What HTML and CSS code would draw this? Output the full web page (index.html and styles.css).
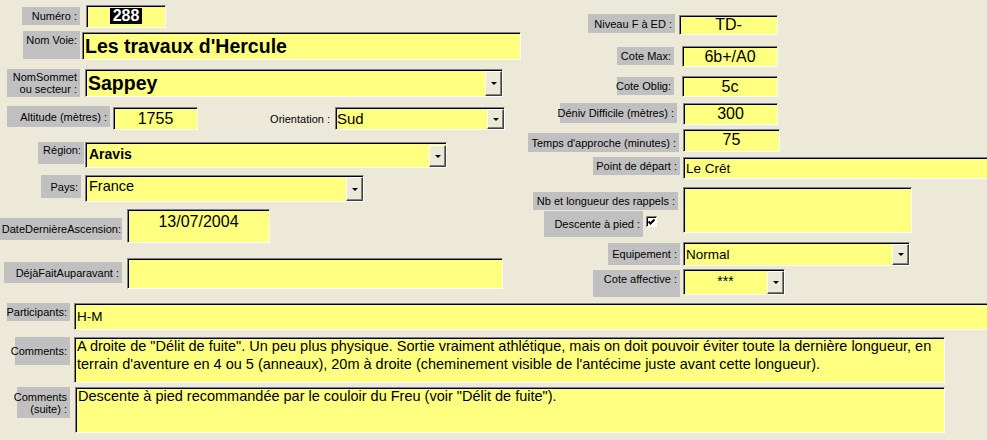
FILE: index.html
```html
<!DOCTYPE html>
<html lang="fr">
<head>
<meta charset="utf-8">
<title>Fiche voie</title>
<link rel="stylesheet" href="styles.css">
</head>
<body>
<div class="form">
  <div class="top">
    <div class="col-left">
      <div class="row r-num">
        <div class="lbl">Numéro :</div>
        <div class="fld c"><span class="sel">288</span></div>
      </div>
      <div class="row r-voie">
        <div class="lbl up">Nom Voie:</div>
        <div class="fld big"><span class="txt">Les travaux d'Hercule</span></div>
      </div>
      <div class="row r-sommet">
        <div class="lbl">NomSommet<br>ou secteur :</div>
        <div class="fld big"><span class="txt">Sappey</span><span class="dd"></span></div>
      </div>
      <div class="row r-alt">
        <div class="lbl">Altitude (mètres) :</div>
        <div class="fld c num">1755</div>
        <div class="lbl plain orient">Orientation :</div>
        <div class="fld sud"><span class="txt">Sud</span><span class="dd"></span></div>
      </div>
      <div class="row r-reg">
        <div class="lbl up">Région:</div>
        <div class="fld t reg"><span class="txt">Aravis</span><span class="dd"></span></div>
      </div>
      <div class="row r-pays">
        <div class="lbl">Pays:</div>
        <div class="fld t pays"><span class="txt">France</span><span class="dd"></span></div>
      </div>
      <div class="row r-date">
        <div class="lbl">DateDernièreAscension:</div>
        <div class="fld c t num date">13/07/2004</div>
      </div>
      <div class="row r-deja">
        <div class="lbl">DéjàFaitAuparavant :</div>
        <div class="fld"></div>
      </div>
    </div>
    <div class="col-right">
      <div class="row r-niv">
        <div class="lbl">Niveau F à ED :</div>
        <div class="fld c num">TD-</div>
      </div>
      <div class="row r-max">
        <div class="lbl">Cote Max:</div>
        <div class="fld c num">6b+/A0</div>
      </div>
      <div class="row r-obl">
        <div class="lbl">Cote Oblig:</div>
        <div class="fld c num">5c</div>
      </div>
      <div class="row r-deniv">
        <div class="lbl">Déniv Difficile (mètres) :</div>
        <div class="fld c num">300</div>
      </div>
      <div class="row r-temps">
        <div class="lbl">Temps d'approche (minutes) :</div>
        <div class="fld c t num">75</div>
      </div>
      <div class="row r-point">
        <div class="lbl">Point de départ :</div>
        <div class="fld small"><span class="txt">Le Crêt</span></div>
      </div>
      <div class="row r-rappel">
        <div class="sub">
          <div class="lbl nb">Nb et longueur des rappels :</div>
          <div class="desc">
            <div class="lbl">Descente à pied :</div>
            <svg class="check" width="11" height="11" viewBox="0 0 11 11" aria-label="coché">
              <rect x="0" y="0" width="11" height="11" fill="#ffffff"/>
              <path d="M0.5 11V0.5H11" fill="none" stroke="#808080" stroke-width="1"/>
              <path d="M1.5 10V1.5H10" fill="none" stroke="#000000" stroke-width="1"/>
              <path d="M2.5 5.5L4.5 7.5L8.5 3.5" fill="none" stroke="#000000" stroke-width="2"/>
            </svg>
          </div>
        </div>
        <div class="fld"></div>
      </div>
      <div class="row r-equip">
        <div class="lbl">Equipement :</div>
        <div class="fld small"><span class="txt">Normal</span><span class="dd"></span></div>
      </div>
      <div class="row r-aff">
        <div class="lbl up">Cote affective :</div>
        <div class="fld"><span class="txt stars">***</span><span class="dd"></span></div>
      </div>
    </div>
  </div>
  <div class="bottom">
    <div class="row r-part">
      <div class="lbl">Participants:</div>
      <div class="fld small"><span class="txt">H-M</span></div>
    </div>
    <div class="row r-com">
      <div class="lbl">Comments:</div>
      <div class="fld memo">A droite de "Délit de fuite". Un peu plus physique. Sortie vraiment athlétique, mais on doit pouvoir éviter toute la dernière longueur, en terrain d'aventure en 4 ou 5 (anneaux), 20m à droite (cheminement visible de l'antécime juste avant cette longueur).</div>
    </div>
    <div class="row r-com2">
      <div class="lbl">Comments<br>(suite) :</div>
      <div class="fld memo">Descente à pied recommandée par le couloir du Freu (voir "Délit de fuite").</div>
    </div>
  </div>
</div>
</body>
</html>
```

FILE: styles.css
```css
* { box-sizing: border-box; }
html, body { margin: 0; padding: 0; }
body {
  background: #ECE9D8;
  width: 987px;
  height: 440px;
  overflow: hidden;
  font-family: "Liberation Sans", Arial, sans-serif;
  color: #000;
}
.form { width: 987px; }
.top { display: flex; align-items: flex-start; height: 297px; }
.col-left { width: 528px; flex: none; }
.col-right { flex: 1; min-width: 0; }
.row { display: flex; align-items: flex-start; }

/* labels */
.lbl {
  flex: none;
  background: #C0C0C0;
  font-size: 11px;
  line-height: 12px;
  display: flex;
  align-items: center;
  justify-content: flex-end;
  text-align: right;
  padding-right: 3px;
  white-space: nowrap;
}
.lbl.up { align-items: flex-start; padding-top: 3px; }
.lbl.plain { background: none; padding-right: 1px; }

/* fields */
.fld {
  flex: none;
  background: #FFFF80;
  border: 1px solid;
  border-color: #808080 #FFFFFF #FFFFFF #808080;
  box-shadow: inset 1px 1px 0 #000;
  display: flex;
  align-items: center;
  padding-left: 3px;
  white-space: nowrap;
  overflow: hidden;
  font-size: 14px;
}
.fld.c { justify-content: center; padding-left: 0; }
.fld.t { align-items: flex-start; padding-top: 2px; }
.fld .txt { flex: 1; min-width: 0; overflow: hidden; }
.fld.big { font-size: 19.5px; font-weight: bold; padding-left: 2px; }
.fld.num { font-size: 16px; }
.fld.small { font-size: 13.5px; padding-left: 2px; }
.fld.memo {
  display: block;
  white-space: normal;
  font-size: 14.5px;
  line-height: 17.5px;
  padding: 0 3px 0 2px;
}
.sel {
  background: #000;
  color: #fff;
  font-weight: bold;
  font-size: 16px;
  line-height: 16px;
  padding: 0 3px;
  margin-top: -1px;
}
.stars { text-align: center; font-size: 14px; align-self: flex-start; padding-top: 3px; }

/* combo button */
.dd {
  flex: none;
  margin-left: auto;
  width: 17px;
  align-self: stretch;
  background: #ECE9D8;
  border: 1px solid;
  border-color: #FFFFFF #404040 #404040 #FFFFFF;
  box-shadow: inset -1px -1px 0 #808080;
  display: flex;
  align-items: center;
  justify-content: center;
  margin-top: 1px;
}
.fld.t .dd { margin-top: -1px; }
.dd::after {
  content: "";
  width: 0;
  height: 0;
  border-left: 3px solid transparent;
  border-right: 3px solid transparent;
  border-top: 3px solid #000;
}

/* ---- left column ---- */
.r-num { margin-top: 5px; }
.r-num .lbl { margin: 2px 0 0 22px; width: 58px; height: 18px; }
.r-num .fld { margin-left: 6px; width: 80px; height: 23px; }

.r-voie { margin-top: 3px; }
.r-voie .lbl { margin-left: 23px; width: 57px; height: 28px; padding-top: 3px; }
.r-voie .fld { margin: 1px 0 0 2px; width: 439px; height: 28px; }

.r-sommet { margin-top: 9px; }
.r-sommet .lbl { margin-left: 7px; width: 73px; height: 28px; }
.r-sommet .fld { margin-left: 5px; width: 418px; height: 28px; }

.r-alt { margin-top: 9px; }
.r-alt .lbl { margin-left: 7px; width: 103px; height: 21px; }
.r-alt .fld.num { margin: 1px 0 0 3px; width: 85px; height: 23px; }
.r-alt .lbl.orient { margin: 1px 0 0 69px; width: 64px; height: 23px; }
.r-alt .fld.sud { margin: 1px 0 0 4px; width: 170px; height: 23px; font-size: 15px; padding-left: 1px; }

.r-reg { margin-top: 12px; }
.r-reg .lbl { margin-left: 38px; width: 46px; height: 22px; padding-top: 2px; }
.r-reg .fld { margin-left: 1px; width: 362px; height: 26px; font-weight: bold; font-size: 14px; padding-top: 3px; }

.r-pays { margin-top: 7px; }
.r-pays .lbl { margin-left: 41px; width: 40px; height: 23px; }
.r-pays .fld { margin-left: 4px; width: 279px; height: 27px; font-size: 14.5px; }

.r-date { margin-top: 7px; }
.r-date .lbl { margin: 9px 0 0 0; width: 122px; height: 22px; padding-right: 1px; }
.r-date .fld { margin-left: 5px; width: 143px; height: 34px; padding-top: 3px; }

.r-deja { margin-top: 15px; }
.r-deja .lbl { margin: 4px 0 0 4px; width: 118px; height: 21px; }
.r-deja .fld { margin-left: 5px; width: 376px; height: 31px; }

/* ---- right column ---- */
.r-niv { margin-top: 14px; }
.r-niv .lbl { margin-left: 60px; width: 87px; height: 19px; }
.r-niv .fld { margin: 1px 0 0 4px; width: 99px; height: 20px; }

.r-max { margin-top: 11px; }
.r-obl { margin-top: 9px; }
.r-max .lbl, .r-obl .lbl { margin: 1px 0 0 89px; width: 57px; height: 18px; }
.r-max .fld, .r-obl .fld { margin-left: 8px; width: 96px; height: 21px; }

.r-deniv { margin-top: 6px; }
.r-deniv .lbl { margin-left: 32px; width: 117px; height: 20px; }
.r-deniv .fld { margin-left: 6px; width: 95px; height: 22px; }

.r-temps { margin-top: 4px; }
.r-temps .lbl { margin: 4px 0 0 0; width: 151px; height: 19px; }
.r-temps .fld { margin-left: 4px; width: 97px; height: 23px; padding-top: 1px; }

.r-point { margin-top: 5px; }
.r-point .lbl { margin-left: 65px; width: 87px; height: 18px; }
.r-point .fld { margin-left: 3px; width: 310px; height: 22px; }

.r-rappel { margin-top: 8px; }
.r-rappel .sub { flex: none; width: 152px; display: flex; flex-direction: column; }
.r-rappel .lbl.nb { margin: 5px 0 0 5px; width: 145px; height: 18px; }
.r-rappel .desc { display: flex; align-items: flex-start; }
.r-rappel .desc .lbl { margin: 1px 0 0 16px; width: 99px; height: 26px; }
.r-rappel .check { flex: none; margin: 6px 0 0 3px; display: block; }
.r-rappel .fld { margin-left: 3px; width: 229px; height: 46px; }

.r-equip { margin-top: 5px; }
.r-equip .lbl { margin: 1px 0 0 80px; width: 72px; height: 22px; }
.r-equip .fld { margin-left: 3px; width: 227px; height: 24px; }

.r-aff { margin-top: 3px; }
.r-aff .lbl { margin: 1px 0 0 65px; width: 87px; height: 27px; padding-top: 3px; }
.r-aff .fld { margin-left: 3px; width: 102px; height: 26px; padding-left: 0; }

/* ---- bottom ---- */
.r-part { margin-top: 6px; }
.r-part .lbl { margin-left: 7px; width: 63px; height: 18px; }
.r-part .fld { margin-left: 4px; width: 925px; height: 27px; padding-left: 2px; }

.r-com { margin-top: 7px; }
.r-com .lbl { margin-left: 15px; width: 55px; height: 28px; }
.r-com .fld { margin-left: 4px; width: 871px; height: 46px; }

.r-com2 { margin-top: 4px; }
.r-com2 .lbl { margin-left: 17px; width: 53px; height: 31px; }
.r-com2 .fld { margin-left: 5px; width: 870px; height: 46px; }
```
